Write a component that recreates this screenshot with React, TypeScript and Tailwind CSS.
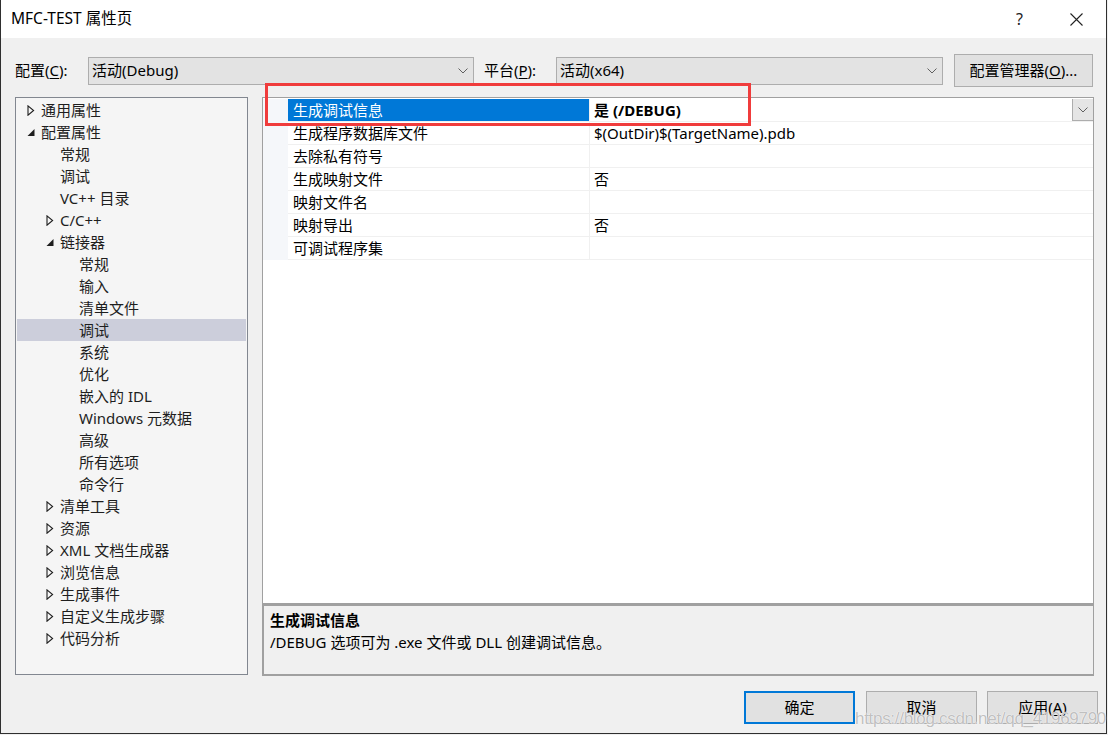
import React from "react";

const FONT = '"Noto Sans", "Noto Sans CJK SC", sans-serif';

function Chevron({ className = "" }: { className?: string }) {
  return (
    <svg width="10" height="6" viewBox="0 0 10 6" className={className}>
      <path d="M0.5 0.5 L5 5 L9.5 0.5" fill="none" stroke="#606060" strokeWidth="1" />
    </svg>
  );
}

function Collapsed() {
  return (
    <svg width="8" height="11" viewBox="0 0 8 11" className="shrink-0">
      <path d="M1 0.8 L6.6 5.5 L1 10.2 Z" fill="none" stroke="#1e1e1e" strokeWidth="1.1" />
    </svg>
  );
}

function Expanded() {
  return (
    <svg width="8" height="11" viewBox="0 0 8 11" className="shrink-0">
      <path d="M7.5 2 L7.5 9 L0.5 9 Z" fill="#1e1e1e" />
    </svg>
  );
}

type TreeItem = { label: string; level: number; state?: "c" | "e"; selected?: boolean };

const tree: TreeItem[] = [
  { label: "通用属性", level: 0, state: "c" },
  { label: "配置属性", level: 0, state: "e" },
  { label: "常规", level: 1 },
  { label: "调试", level: 1 },
  { label: "VC++ 目录", level: 1 },
  { label: "C/C++", level: 1, state: "c" },
  { label: "链接器", level: 1, state: "e" },
  { label: "常规", level: 2 },
  { label: "输入", level: 2 },
  { label: "清单文件", level: 2 },
  { label: "调试", level: 2, selected: true },
  { label: "系统", level: 2 },
  { label: "优化", level: 2 },
  { label: "嵌入的 IDL", level: 2 },
  { label: "Windows 元数据", level: 2 },
  { label: "高级", level: 2 },
  { label: "所有选项", level: 2 },
  { label: "命令行", level: 2 },
  { label: "清单工具", level: 1, state: "c" },
  { label: "资源", level: 1, state: "c" },
  { label: "XML 文档生成器", level: 1, state: "c" },
  { label: "浏览信息", level: 1, state: "c" },
  { label: "生成事件", level: 1, state: "c" },
  { label: "自定义生成步骤", level: 1, state: "c" },
  { label: "代码分析", level: 1, state: "c" },
];

const props: { name: string; value: string }[] = [
  { name: "生成调试信息", value: "是 (/DEBUG)" },
  { name: "生成程序数据库文件", value: "$(OutDir)$(TargetName).pdb" },
  { name: "去除私有符号", value: "" },
  { name: "生成映射文件", value: "否" },
  { name: "映射文件名", value: "" },
  { name: "映射导出", value: "否" },
  { name: "可调试程序集", value: "" },
];

function TreeRow({ item }: { item: TreeItem }) {
  const triPad = item.level === 0 ? "pl-[10px]" : item.level === 1 ? "pl-[29px]" : "pl-[48px]";
  return (
    <div
      className={`h-[22px] flex items-center ${triPad} ${item.selected ? "bg-[#cccedb]" : ""}`}
    >
      <div className="w-[14px] flex items-center">
        {item.state === "c" ? <Collapsed /> : item.state === "e" ? <Expanded /> : null}
      </div>
      <span className="text-[15px] text-[#1e1e1e] leading-[22px] whitespace-nowrap">
        {item.label}
      </span>
    </div>
  );
}

export default function App() {
  return (
    <div className="w-[1108px] h-[735px] bg-[#f0f0f0] relative overflow-hidden" style={{ fontFamily: FONT }}>
      <div className="w-[1107px] h-[734px] border-x border-b border-[#2f2f2f] flex flex-col bg-[#f0f0f0]">
        {/* Title bar */}
        <div className="h-[38px] bg-white flex items-center shrink-0">
          <span className="pl-[10px] text-[15.5px] text-black">MFC-TEST 属性页</span>
          <div className="flex-1" />
          <span className="text-[16px] text-[#222] mr-[47px]">?</span>
          <svg width="13" height="13" viewBox="0 0 13 13" className="mr-[23px]">
            <path d="M0.5 0.5 L12.5 12.5 M12.5 0.5 L0.5 12.5" stroke="#222" strokeWidth="1.1" />
          </svg>
        </div>

        {/* Config row */}
        <div className="flex items-center h-[33px] mt-[16px] pl-[14px] shrink-0">
          <span className="w-[73px] text-[15px] text-black">
            配置(<span className="underline underline-offset-2">C</span>):
          </span>
          <div className="w-[386px] h-[28px] bg-[#e3e3e3] border border-[#adadad] flex items-center pl-[3px] pr-[5px]">
            <span className="text-[15px] text-black flex-1">活动(Debug)</span>
            <Chevron />
          </div>
          <span className="ml-[10px] w-[72px] text-[15px] text-black">
            平台(<span className="underline underline-offset-2">P</span>):
          </span>
          <div className="w-[387px] h-[28px] bg-[#e3e3e3] border border-[#adadad] flex items-center pl-[3px] pr-[5px]">
            <span className="text-[15px] text-black flex-1">活动(x64)</span>
            <Chevron />
          </div>
          <div className="ml-[11px] w-[139px] h-[33px] bg-[#e1e1e1] border border-[#adadad] flex items-center justify-center">
            <span className="text-[15px] text-black">
              配置管理器(<span className="underline underline-offset-2">O</span>)...
            </span>
          </div>
        </div>

        {/* Main area */}
        <div className="flex mt-[10px] pl-[14px] shrink-0">
          {/* Tree */}
          <div className="w-[233px] h-[578px] bg-[#f5f5f5] border border-[#828790] pt-[1px] px-[1px] overflow-hidden">
            {tree.map((t, i) => (
              <TreeRow key={i} item={t} />
            ))}
          </div>

          {/* Right column */}
          <div className="ml-[14px] w-[832px] flex flex-col">
            <div className="h-[507px] bg-white border border-[#a0a0a0] pt-[1px]">
              <div className="flex">
                <div className="w-[25px] bg-[#f5f7fa]" />
                <div className="flex-1 flex flex-col">
                  {props.map((p, i) => (
                    <div key={i} className="h-[23px] flex border-b border-[#f0f0f0]">
                      <div
                        className={`w-[302px] h-[22px] flex items-center pl-[5px] border-r border-[#f0f0f0] ${
                          i === 0 ? "bg-[#0078d7] text-white" : "text-black"
                        }`}
                      >
                        <span className="text-[15px] whitespace-nowrap">{p.name}</span>
                      </div>
                      <div className="flex-1 h-[22px] flex items-center pl-[4px]">
                        <span className={`text-[15px] text-black whitespace-nowrap flex-1 ${i === 0 ? "font-bold" : ""}`}>
                          {p.value}
                        </span>
                        {i === 0 && (
                          <div className="w-[21px] h-[22px] bg-[#e5e5e5] border-l border-b border-[#adadad] flex items-center justify-center">
                            <Chevron />
                          </div>
                        )}
                      </div>
                    </div>
                  ))}
                </div>
              </div>
            </div>
            <div className="h-[72px] bg-[#f0f0f0] border-t-2 border-l-2 border-b-2 border-r border-[#a0a0a0] pt-[3px] pl-[6px]">
              <div className="text-[15px] font-bold leading-[22px] text-black">生成调试信息</div>
              <div className="text-[15px] leading-[22px] text-black">/DEBUG 选项可为 .exe 文件或 DLL 创建调试信息。</div>
            </div>
          </div>
        </div>

        {/* Buttons */}
        <div className="flex justify-end mt-[15px] pr-[8px] shrink-0">
          <div className="w-[111px] h-[33px] bg-[#e1e1e1] border-2 border-[#0078d7] flex items-center justify-center">
            <span className="text-[15px] text-black">确定</span>
          </div>
          <div className="ml-[11px] w-[111px] h-[33px] bg-[#e1e1e1] border border-[#adadad] flex items-center justify-center">
            <span className="text-[15px] text-black">取消</span>
          </div>
          <div className="ml-[10px] w-[111px] h-[33px] bg-[#e1e1e1] border border-[#adadad] flex items-center justify-center">
            <span className="text-[15px] text-black">
              应用(<span className="underline underline-offset-2">A</span>)
            </span>
          </div>
        </div>
      </div>

      {/* Red highlight box */}
      <div className="absolute left-[265px] top-[83px] w-[486px] h-[43px] border-[3px] border-[#f03c3c] pointer-events-none" />

      {/* Watermark */}
      <div
        className="absolute left-[855px] top-[706px] text-[17px] text-[#b8b8b8]/90 whitespace-nowrap pointer-events-none tracking-[-0.3px]"
        style={{ fontFamily: '"Liberation Sans", Arial, sans-serif', textShadow: "0 0 1px #fff, 0 0 1px #fff" }}
      >
        https://blog.csdn.net/qq_41969790
      </div>
    </div>
  );
}
